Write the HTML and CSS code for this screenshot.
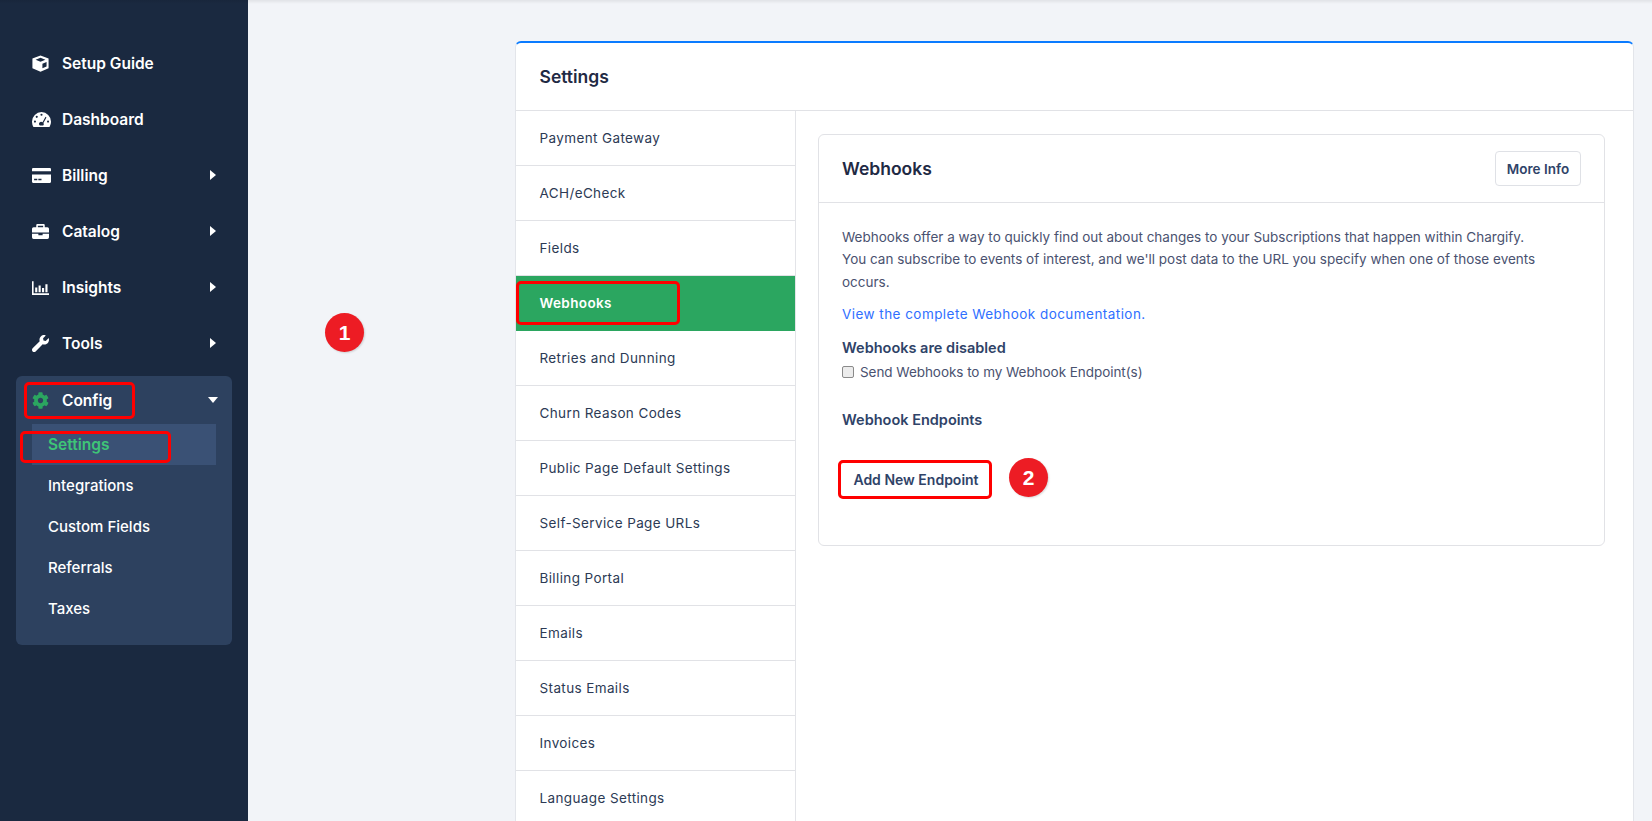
FILE: index.html
```html
<!DOCTYPE html>
<html lang="en">
<head>
<meta charset="utf-8">
<title>Settings - Webhooks</title>
<link rel="stylesheet" href="styles.css">
</head>
<body>
<div class="top-shade"></div>
<div class="app">
  <nav class="sidebar">
    <a class="nav-item">
      <svg class="nav-icon" viewBox="0 0 16 16"><path fill="#fff" fill-rule="evenodd" d="M8 .4 15.600 3.400V12.400L8 15.800.4 12.400V3.400zM8 2.600 3.400 4.500 8 6.400 12.600 4.500zM9.800 8.300V12.500L13.700 10.800V6.700z"/></svg>
      <span>Setup Guide</span>
    </a>
    <a class="nav-item">
      <svg class="nav-icon nav-icon-wide" viewBox="0 0 18 16"><path fill="#fff" fill-rule="evenodd" d="M9 1a9 9 0 0 1 9 9c0 1.800-.5 3.500-1.400 5H1.400A9 9 0 0 1 0 10a9 9 0 0 1 9-9zM9 2.500a1 1 0 1 0 0 2 1 1 0 0 0 0-2zM4.500 4.500a1 1 0 1 0 0 2 1 1 0 0 0 0-2zM2.800 9a1 1 0 1 0 0 2 1 1 0 0 0 0-2zM15.200 9a1 1 0 1 0 0 2 1 1 0 0 0 0-2zM12.800 5.500 10 10.600a2 2 0 1 0-2.500 3.200h3a2 2 0 0 0 .3-2.500l2.900-5.300z"/></svg>
      <span>Dashboard</span>
    </a>
    <a class="nav-item">
      <svg class="nav-icon nav-icon-wide" viewBox="0 0 18 16"><path fill="#fff" fill-rule="evenodd" d="M1 1h16a1 1 0 0 1 1 1v2H0V2a1 1 0 0 1 1-1zM0 7h18v7a1 1 0 0 1-1 1H1a1 1 0 0 1-1-1zM2 11v1.500h3V11zM6 11v1.500h3V11z"/></svg>
      <span>Billing</span>
      <i class="caret-right"></i>
    </a>
    <a class="nav-item">
      <svg class="nav-icon" viewBox="0 0 16 16"><path fill="#fff" fill-rule="evenodd" d="M5 1h6a1 1 0 0 1 1 1v2h2.500A1.500 1.500 0 0 1 16 5.500V9H0V5.500A1.500 1.500 0 0 1 1.500 4H4V2a1 1 0 0 1 1-1zM5.500 2.500V4h5V2.500zM0 10h6v1.500h4V10h6v3.500A1.500 1.500 0 0 1 14.500 15h-13A1.500 1.500 0 0 1 0 13.500z"/></svg>
      <span>Catalog</span>
      <i class="caret-right"></i>
    </a>
    <a class="nav-item">
      <svg class="nav-icon" viewBox="0 0 16 16"><path fill="#fff" d="M0 2h1.500v11.500H16V15H0zM3 8h2v4.500H3zM6.200 6h2v6.500h-2zM9.400 8.500h2v4h-2zM12.600 5h2v7.500h-2z"/></svg>
      <span>Insights</span>
      <i class="caret-right"></i>
    </a>
    <a class="nav-item">
      <svg class="nav-icon" viewBox="0 0 512 512"><path fill="#fff" d="M507.730 109.100c-2.240-9.030-13.540-12.090-20.120-5.510l-74.360 74.360-67.880-11.310-11.310-67.880 74.360-74.360c6.620-6.620 3.430-17.900-5.660-20.160-47.380-11.740-99.550.91-136.580 37.930-39.640 39.640-50.550 97.100-34.050 147.200L18.740 402.760c-24.990 24.990-24.990 65.510 0 90.500 24.990 24.990 65.510 24.990 90.500 0l213.210-213.210c50.120 16.710 107.470 5.680 147.370-34.220 37.070-37.070 49.700-89.320 37.910-136.730z"/></svg>
      <span>Tools</span>
      <i class="caret-right"></i>
    </a>
    <div class="nav-group">
      <a class="nav-group-head">
        <svg class="nav-icon" viewBox="0 0 512 512"><path fill="#2ba660" d="M487.400 315.700l-42.600-24.600c4.300-23.200 4.300-47 0-70.200l42.600-24.600c4.900-2.800 7.100-8.600 5.500-14-11.100-35.600-30-67.800-54.700-94.600-3.800-4.100-10-5.100-14.800-2.300L380.800 110c-17.900-15.400-38.500-27.300-60.800-35.100V25.800c0-5.600-3.900-10.500-9.400-11.700-36.700-8.200-74.300-7.800-109.200 0-5.500 1.200-9.400 6.100-9.400 11.700V75c-22.200 7.900-42.800 19.800-60.800 35.100L88.700 85.500c-4.900-2.800-11-1.900-14.800 2.300-24.700 26.700-43.600 58.900-54.700 94.600-1.700 5.400.6 11.200 5.500 14L67.300 221c-4.300 23.200-4.300 47 0 70.200l-42.600 24.600c-4.900 2.800-7.100 8.600-5.500 14 11.100 35.600 30 67.800 54.700 94.600 3.800 4.100 10 5.100 14.800 2.300l42.600-24.600c17.900 15.400 38.500 27.300 60.800 35.100v49.200c0 5.600 3.900 10.500 9.400 11.700 36.700 8.200 74.300 7.800 109.200 0 5.500-1.200 9.400-6.100 9.400-11.700v-49.200c22.200-7.900 42.800-19.800 60.800-35.100l42.600 24.600c4.900 2.800 11 1.900 14.800-2.300 24.700-26.700 43.600-58.900 54.700-94.600 1.500-5.500-.7-11.300-5.600-14.100zM256 336c-44.100 0-80-35.900-80-80s35.900-80 80-80 80 35.900 80 80-35.900 80-80 80z"/></svg>
        <span>Config</span>
        <i class="caret-down"></i>
      </a>
      <a class="sub-item sub-item-active">Settings</a>
      <a class="sub-item">Integrations</a>
      <a class="sub-item">Custom Fields</a>
      <a class="sub-item">Referrals</a>
      <a class="sub-item">Taxes</a>
    </div>
  </nav>

  <main class="content">
    <section class="card">
      <header class="card-head">Settings</header>
      <div class="card-body">
        <ul class="menu">
          <li class="menu-item">Payment Gateway</li>
          <li class="menu-item">ACH/eCheck</li>
          <li class="menu-item">Fields</li>
          <li class="menu-item menu-item-active">Webhooks</li>
          <li class="menu-item">Retries and Dunning</li>
          <li class="menu-item">Churn Reason Codes</li>
          <li class="menu-item">Public Page Default Settings</li>
          <li class="menu-item">Self-Service Page URLs</li>
          <li class="menu-item">Billing Portal</li>
          <li class="menu-item">Emails</li>
          <li class="menu-item">Status Emails</li>
          <li class="menu-item">Invoices</li>
          <li class="menu-item">Language Settings</li>
        </ul>
        <div class="detail">
          <section class="panel">
            <header class="panel-head">
              <h2 class="panel-title">Webhooks</h2>
              <button class="btn btn-info">More Info</button>
            </header>
            <div class="panel-body">
              <p class="intro">Webhooks offer a way to quickly find out about changes to your Subscriptions that happen within Chargify.<br>You can subscribe to events of interest, and we'll post data to the URL you specify when one of those events<br>occurs.</p>
              <a class="doc-link">View the complete Webhook documentation.</a>
              <h3 class="sub-head">Webhooks are disabled</h3>
              <label class="check"><input type="checkbox"><span>Send Webhooks to my Webhook Endpoint(s)</span></label>
              <h3 class="sub-head sub-head-endpoints">Webhook Endpoints</h3>
              <button class="btn btn-add">Add New Endpoint</button>
            </div>
          </section>
        </div>
      </div>
    </section>
  </main>
</div>

<div class="mark mark-config"></div>
<div class="mark mark-settings"></div>
<div class="mark mark-webhooks"></div>
<div class="mark mark-add"></div>
<div class="step step-one">1</div>
<div class="step step-two">2</div>
</body>
</html>
```
FILE: styles.css
```css
* { box-sizing: border-box; }
html, body { height: 100%; }
body {
  margin: 0;
  overflow: hidden;
  background: #f2f4f8;
  font-family: Inter, "Noto Sans", "Liberation Sans", sans-serif;
  font-size: 13.500px;
  color: #1f2a44;
}
.top-shade {
  position: absolute;
  left: 0;
  right: 0;
  top: 0;
  height: 4px;
  background: linear-gradient(rgba(0, 0, 0, .07), rgba(0, 0, 0, 0));
}
.app { display: flex; height: 821px; }

/* sidebar */
.sidebar {
  flex: 0 0 248px;
  background: #1a2940;
  padding: 35px 16px 0;
}
.nav-item, .nav-group-head {
  display: flex;
  align-items: center;
  height: 56px;
  padding-left: 16px;
  color: #fff;
  font-size: 15.500px;
  font-weight: 600;
}
.nav-icon { width: 17px; height: 17px; flex: none; margin-right: 13px; }
.nav-icon-wide { width: 19px; margin-right: 11px; }
.caret-right {
  margin-left: auto;
  margin-right: 16px;
  border-left: 6px solid #fff;
  border-top: 5px solid transparent;
  border-bottom: 5px solid transparent;
}
.caret-down {
  margin-left: auto;
  margin-right: 14px;
  border-top: 6px solid #fff;
  border-left: 5.500px solid transparent;
  border-right: 5.500px solid transparent;
}
.nav-group {
  margin-top: 5px;
  height: 269px;
  background: #2d415f;
  border-radius: 6px;
}
.nav-group-head { height: 48px; }
.sub-item {
  display: flex;
  align-items: center;
  height: 41px;
  margin: 0 16px;
  padding-left: 16px;
  color: #fff;
  font-size: 15px;
  font-weight: 500;
}
.sub-item-active {
  background: #3a5175;
  color: #3ec577;
  font-size: 15.500px;
  font-weight: 600;
}

/* content */
.content { flex: 1; min-width: 0; padding: 41px 18px 0 267px; }
.card {
  height: 900px;
  background: #fff;
  border: 1px solid #e3e5ea;
  border-top: 2px solid #0a7bff;
  border-radius: 6px 6px 0 0;
}
.card-head {
  display: flex;
  align-items: center;
  height: 68px;
  padding-left: 23.500px;
  font-size: 17.500px;
  font-weight: 600;
  border-bottom: 1px solid #e1e2e6;
}
.card-body { display: flex; }
.menu {
  flex: 0 0 280px;
  margin: 0;
  padding: 0;
  list-style: none;
  border-right: 1px solid #e3e4e8;
  height: 830px;
}
.menu-item {
  display: flex;
  align-items: center;
  height: 55px;
  padding-left: 23.500px;
  color: #2c3a55;
  font-size: 13.500px;
  letter-spacing: .38px;
  border-bottom: 1px solid #e1e2e6;
}
.menu-item-active {
  background: #2ba660;
  color: #fff;
  font-weight: 600;
  border-bottom-color: #2ba660;
}
.detail { flex: 1; padding: 23px 28px 0 22px; }
.panel { height: 412px; border: 1px solid #e1e2e6; border-radius: 6px; }
.panel-head {
  display: flex;
  align-items: center;
  justify-content: space-between;
  height: 68px;
  padding: 0 23px;
  border-bottom: 1px solid #e1e2e6;
}
.panel-title { margin: 0; font-size: 17.500px; font-weight: 600; color: #1f2a44; }
.btn {
  background: #fff;
  border: 1px solid #dfe1e6;
  border-radius: 4px;
  font-family: inherit;
  font-size: 13.500px;
  font-weight: 600;
  color: #2f4368;
}
.btn-info { width: 86px; height: 35px; padding: 0; }
.panel-body { padding: 23px 23px 0; }
.intro {
  margin: 0 0 10px;
  font-size: 13.500px;
  line-height: 22.300px;
  letter-spacing: 0;
  white-space: nowrap;
  color: #4a5270;
}
.doc-link {
  display: block;
  font-size: 13.500px;
  line-height: 22px;
  letter-spacing: .45px;
  color: #2f6fff;
}
.sub-head {
  margin: 13px 0 0;
  font-size: 14.500px;
  line-height: 20px;
  font-weight: 600;
  color: #2f4368;
}
.sub-head-endpoints { margin-top: 28px; }
.check {
  display: flex;
  align-items: center;
  height: 20px;
  margin-top: 4px;
  font-size: 13.500px;
  letter-spacing: -.05px;
  color: #4a5270;
}
.check input {
  appearance: none;
  width: 12px;
  height: 12px;
  margin: 0 6px 0 0;
  background: #ececec;
  border: 1px solid #8a8a8a;
  border-radius: 2px;
}
.btn-add {
  display: block;
  width: 148px;
  height: 36px;
  margin-top: 32px;
  padding: 0;
  font-size: 14px;
  border-color: #fff;
}

/* annotations drawn over the screenshot */
.mark {
  position: absolute;
  border: 3px solid #f00;
  border-radius: 5px;
}
.mark-config { left: 24px; top: 382px; width: 111px; height: 37px; }
.mark-settings { left: 20px; top: 431px; width: 151px; height: 32px; }
.mark-webhooks { left: 516px; top: 281px; width: 164px; height: 44px; }
.mark-add { left: 838px; top: 460px; width: 154px; height: 39px; }
.step {
  position: absolute;
  display: flex;
  align-items: center;
  justify-content: center;
  width: 39px;
  height: 39px;
  border-radius: 50%;
  background: #ed1c24;
  color: #fff;
  font-family: "Liberation Sans", sans-serif;
  font-size: 21px;
  font-weight: 700;
  box-shadow: 1px 1px 2px rgba(0, 0, 0, .15);
}
.step-one { left: 325px; top: 313px; }
.step-two { left: 1009px; top: 458px; }
```
